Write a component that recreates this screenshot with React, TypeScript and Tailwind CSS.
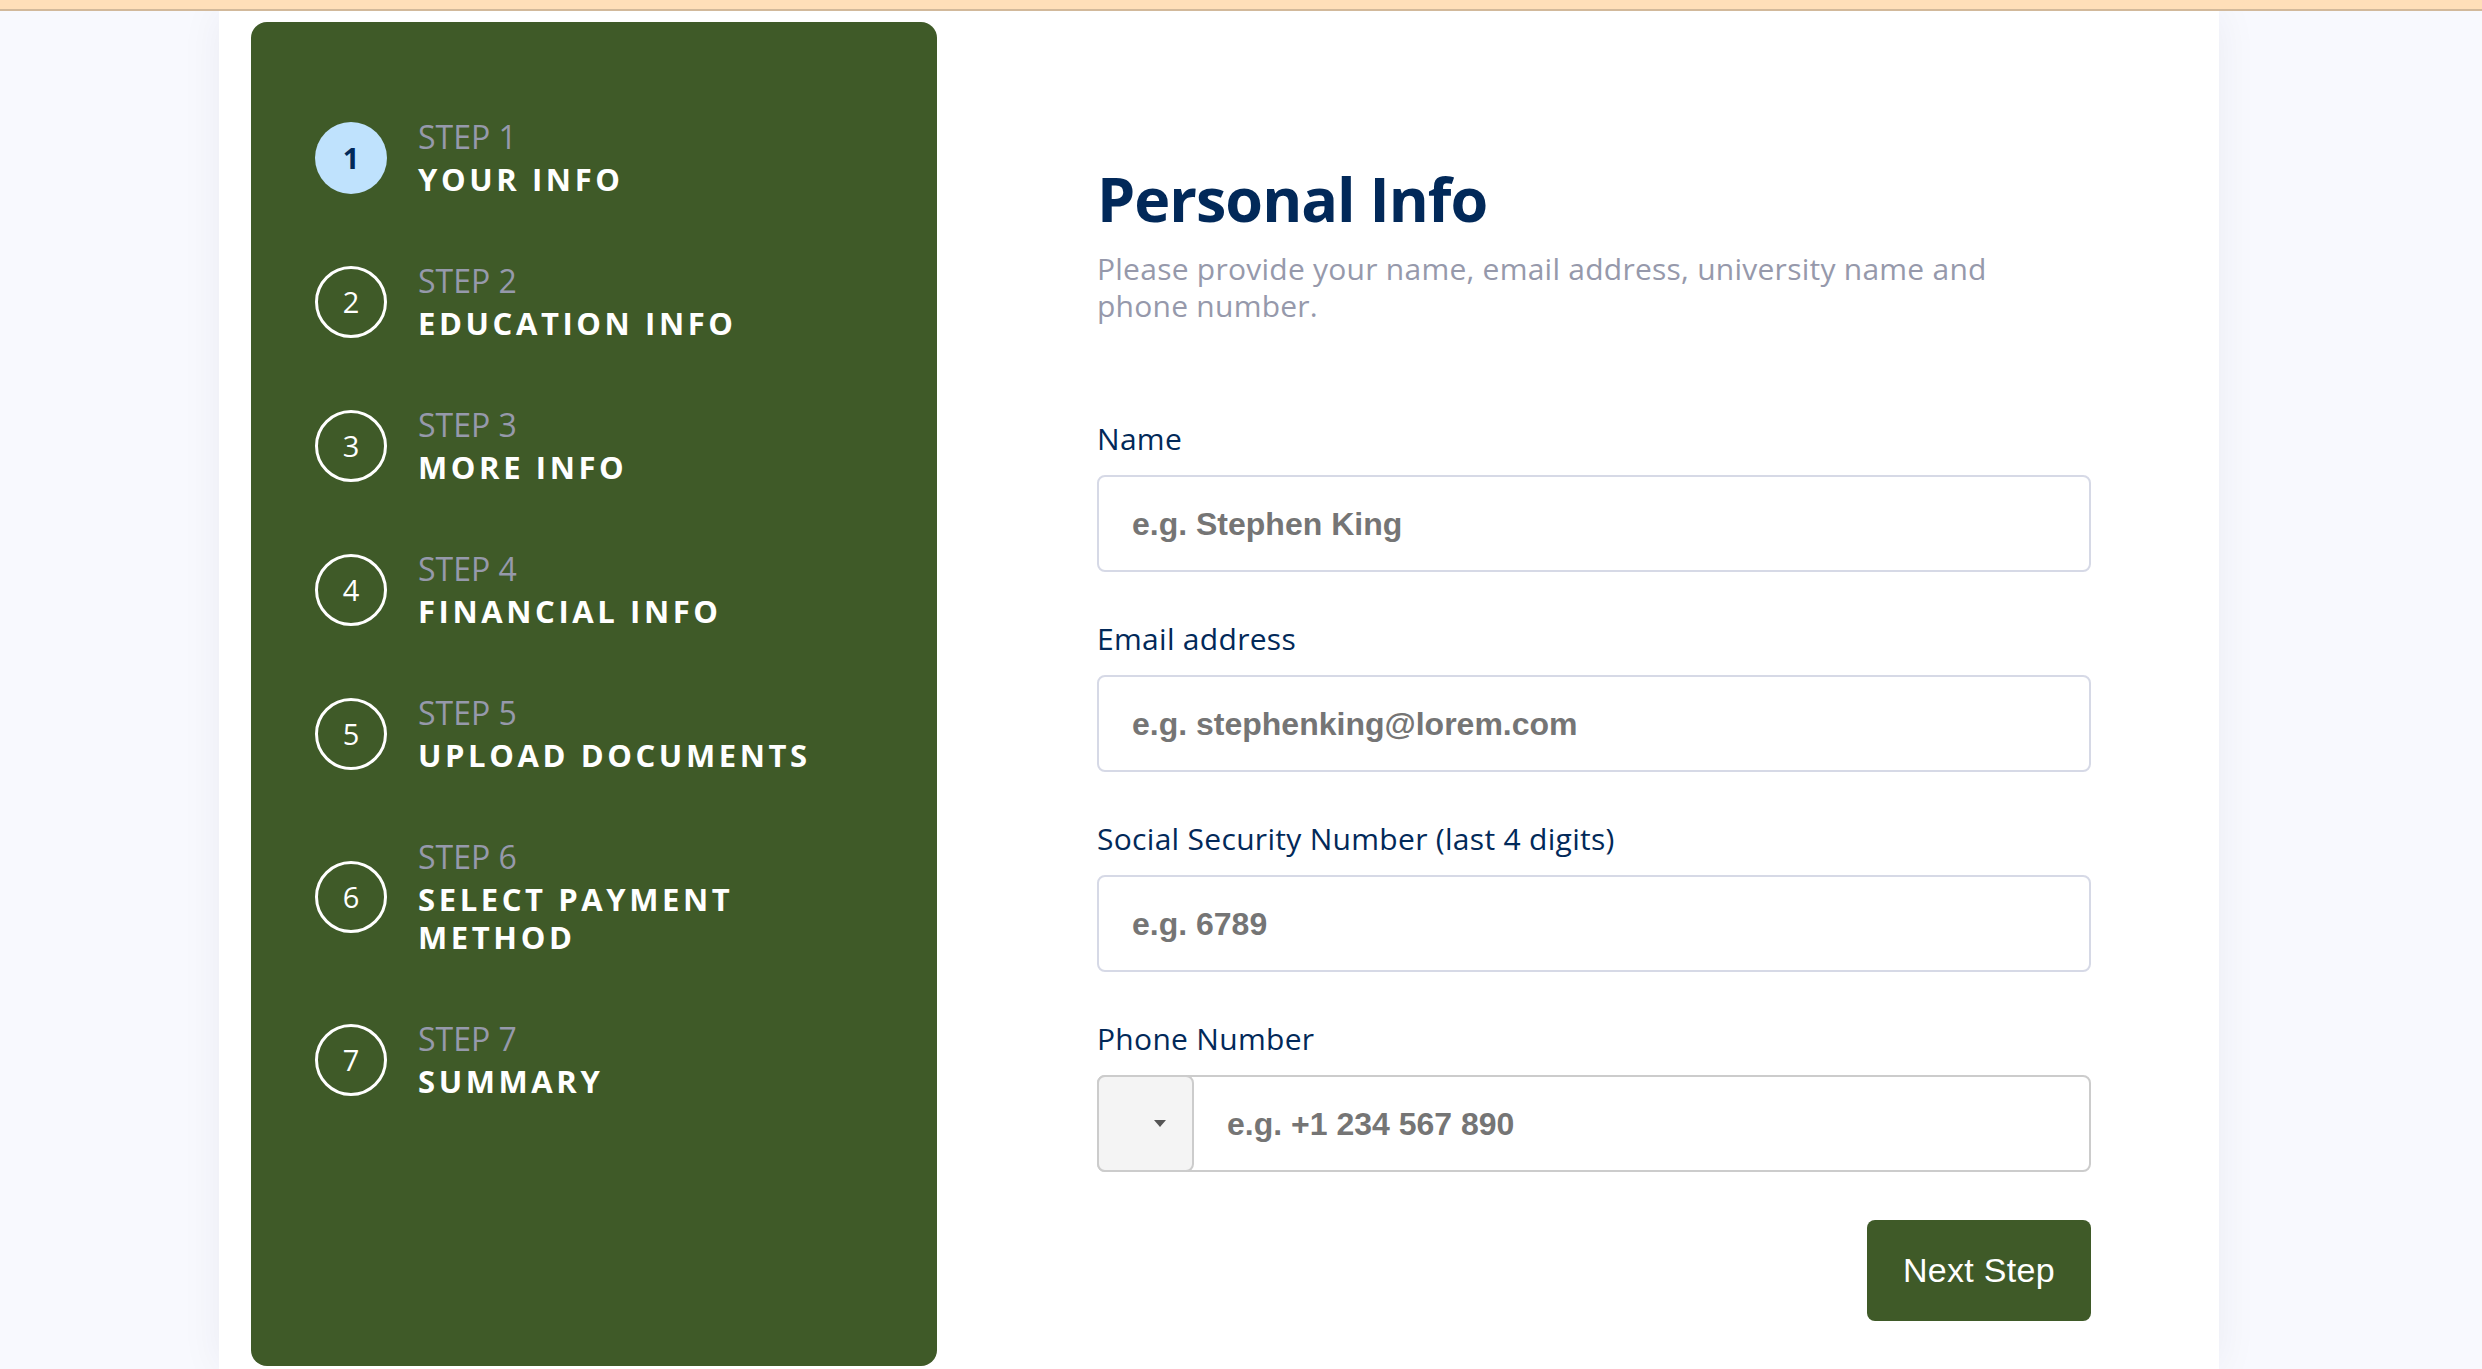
import React from "react";

const steps: { n: number; lines: string[] }[] = [
  { n: 1, lines: ["YOUR INFO"] },
  { n: 2, lines: ["EDUCATION INFO"] },
  { n: 3, lines: ["MORE INFO"] },
  { n: 4, lines: ["FINANCIAL INFO"] },
  { n: 5, lines: ["UPLOAD DOCUMENTS"] },
  { n: 6, lines: ["SELECT PAYMENT", "METHOD"] },
  { n: 7, lines: ["SUMMARY"] },
];

function Step({ n, lines }: { n: number; lines: string[] }) {
  const active = n === 1;
  return (
    <div className="flex items-center gap-[31px]">
      <div
        className={
          active
            ? "flex h-[72px] w-[72px] shrink-0 items-center justify-center rounded-full bg-[#bfe2fd] text-[29px] font-bold text-[#022959]"
            : "flex h-[72px] w-[72px] shrink-0 items-center justify-center rounded-full border-[3px] border-white text-[29px] font-medium text-white"
        }
      >
        {n}
      </div>
      <div className="flex flex-col">
        <span className="mb-[4px] text-[32px] leading-[38px] text-[#9699ab]">STEP {n}</span>
        {lines.map((l) => (
          <span key={l} className="text-[31px] font-bold leading-[38px] tracking-[3.6px] text-white">
            {l}
          </span>
        ))}
      </div>
    </div>
  );
}

function Field({ label, placeholder }: { label: string; placeholder: string }) {
  return (
    <div className="flex flex-col">
      <label className="mb-[18px] text-[30px] leading-[36px] tracking-[0.3px] text-[#022959]">{label}</label>
      <div className="flex h-[97px] items-center rounded-[8px] border-2 border-[#d6d9e6] bg-white pl-[33px]">
        <span className="font-['Liberation_Sans',Arial,sans-serif] text-[32px] font-bold text-[#757575]">
          {placeholder}
        </span>
      </div>
    </div>
  );
}

export default function App() {
  return (
    <div className="relative h-[1369px] w-full overflow-hidden bg-[#f8f9fe] font-['Open_Sans',sans-serif]">
      <div className="relative z-10 h-[11px] border-b-2 border-[#d2b99b] bg-[#ffdfb9]" />
      <div className="ml-[219px] flex h-[1358px] w-[2000px] bg-white pl-[32px] pt-[11px] shadow-[0_0_40px_rgba(20,30,60,0.06)]">
        <aside className="flex h-[1344px] w-[686px] shrink-0 flex-col gap-[64px] rounded-[16px] bg-[#3f5a28] pl-[64px] pt-[96px]">
          {steps.map((s) => (
            <Step key={s.n} n={s.n} lines={s.lines} />
          ))}
        </aside>
        <main className="ml-[160px] flex w-[994px] flex-col pt-[141px]">
          <h1 className="text-[61px] font-bold leading-[72px] tracking-[-1px] text-[#022959]">Personal Info</h1>
          <p className="mt-[15px] w-[980px] text-[30px] leading-[37px] tracking-[0.25px] text-[#9699ab]">
            Please provide your name, email address, university name and
            <br />
            phone number.
          </p>
          <div className="mt-[97px] flex flex-col gap-[49px]">
            <Field label="Name" placeholder="e.g. Stephen King" />
            <Field label="Email address" placeholder="e.g. stephenking@lorem.com" />
            <Field label="Social Security Number (last 4 digits)" placeholder="e.g. 6789" />
            <div className="flex flex-col">
              <label className="mb-[18px] text-[30px] leading-[36px] tracking-[0.3px] text-[#022959]">Phone Number</label>
              <div className="flex h-[97px] items-stretch rounded-[8px] border-2 border-[#cccccc] bg-white">
                <div className="-my-[2px] -ml-[2px] flex w-[97px] shrink-0 items-center justify-end rounded-[8px] border-2 border-[#cccccc] bg-[#f4f4f4] pr-[26px]">
                  <svg width="12" height="7" viewBox="0 0 12 7">
                    <polygon points="0,0 12,0 6,7" fill="#555555" />
                  </svg>
                </div>
                <div className="flex items-center pl-[33px]">
                  <span className="font-['Liberation_Sans',Arial,sans-serif] text-[32px] font-bold text-[#757575]">
                    e.g. +1 234 567 890
                  </span>
                </div>
              </div>
            </div>
          </div>
          <div className="mt-[48px] flex justify-end">
            <button className="flex h-[101px] w-[224px] items-center justify-center rounded-[8px] bg-[#3f5a28] font-['Liberation_Sans',Arial,sans-serif] text-[34px] tracking-[0.3px] text-white">
              Next Step
            </button>
          </div>
        </main>
      </div>
    </div>
  );
}
